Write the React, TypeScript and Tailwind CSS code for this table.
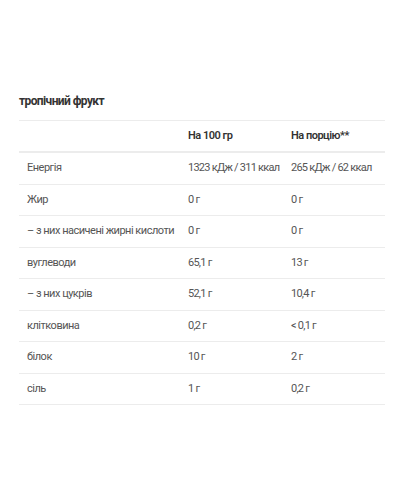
const rows: [string, string, string][] = [
  ["Енергія", "1323 кДж / 311 ккал", "265 кДж / 62 ккал"],
  ["Жир", "0 г", "0 г"],
  ["– з них насичені жирні кислоти", "0 г", "0 г"],
  ["вуглеводи", "65,1 г", "13 г"],
  ["– з них цукрів", "52,1 г", "10,4 г"],
  ["клітковина", "0,2 г", "< 0,1 г"],
  ["білок", "10 г", "2 г"],
  ["сіль", "1 г", "0,2 г"],
];

export default function App() {
  return (
    <div className="w-[400px] h-[500px] bg-white font-['Roboto',sans-serif] pt-[92px] px-[19px]">
      <h3 className="text-[12px] font-bold text-[#333] leading-[18px] tracking-[-0.6px]">тропічний фрукт</h3>
      <div className="mt-[10px] w-[366px] border-t border-[#ececec]">
        <div className="grid grid-cols-[161px_103px_102px] h-[32px] items-center border-b-2 border-[#ececec] text-[11px] tracking-[-0.5px] font-semibold text-[#333]">
          <div />
          <div className="pl-2">На 100 гр</div>
          <div className="pl-2">На порцію**</div>
        </div>
        {rows.map((r, i) => (
          <div
            key={i}
            className="grid grid-cols-[161px_103px_102px] h-[31.5px] items-center border-b border-[#ececec] text-[11px] text-[#555]"
          >
            <div className="pl-2 whitespace-nowrap tracking-[-0.5px]">{r[0]}</div>
            <div className="pl-2 whitespace-nowrap tracking-[-0.75px]">{r[1]}</div>
            <div className="pl-2 whitespace-nowrap tracking-[-0.75px]">{r[2]}</div>
          </div>
        ))}
      </div>
    </div>
  );
}
